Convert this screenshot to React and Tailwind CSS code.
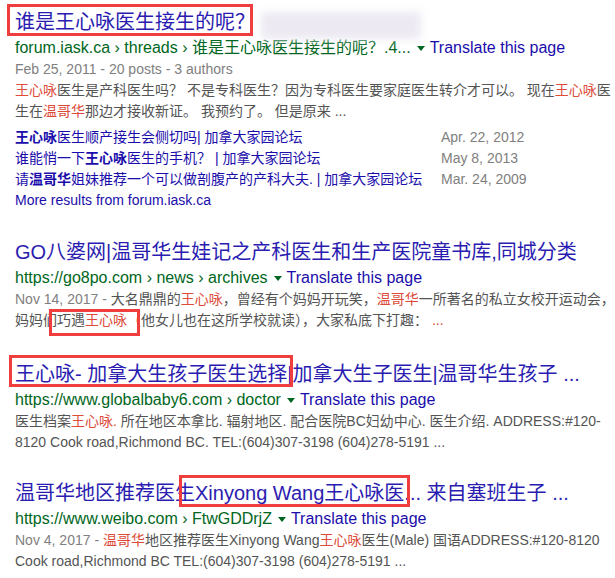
import React from "react";

function Box({ cls }) {
  return <span className={`absolute border-[3px] border-[#f03e3e] pointer-events-none ${cls}`} />;
}

function Arrow() {
  return (
    <span className="inline-block align-middle ml-[6px] mr-[5px] w-0 h-0 border-l-[4px] border-r-[4px] border-t-[5px] border-l-transparent border-r-transparent border-t-[#006621]" />
  );
}

function UrlLine({ children }) {
  return (
    <div className="mt-[2px] h-[22px] leading-[22px] text-[16px] text-[#006621] whitespace-nowrap">
      {children}
      <Arrow />
      <span className="text-[#1a0dab]">Translate this page</span>
    </div>
  );
}

function Line({ children }) {
  return <div className="relative h-[21px] leading-[21px] text-[14px] text-[#545454] whitespace-nowrap">{children}</div>;
}

const R = "text-[#dd4b39]";
const D = "text-[#808080]";

function SubLink({ children, date }) {
  return (
    <div className="flex h-[21px] leading-[21px] text-[14px] whitespace-nowrap">
      <div className="w-[426px] text-[#1a0dab]">{children}</div>
      <div className="text-[#808080]">{date}</div>
    </div>
  );
}

export default function App() {
  return (
    <div className="w-[615px] h-[578px] overflow-hidden bg-white pt-[9px] pl-[15px] font-['Liberation_Sans','Noto_Sans_CJK_SC',sans-serif]">
      {/* Result 1 */}
      <div>
        <div className="flex items-start h-[26px] leading-[26px] text-[20px] text-[#2a1cb0] whitespace-nowrap">
          <span className="relative inline-block">
            谁是王心咏医生接生的呢？
            <Box cls="left-[-8px] right-[2px] top-[-5px] h-[32px]" />
          </span>
          <div className="ml-[6px] mt-[3px] w-[160px] h-[27px] bg-[#ece9f2] blur-[4px]" />
        </div>
        <UrlLine>forum.iask.ca › threads › 谁是王心咏医生接生的呢？.4...</UrlLine>
        <Line>
          <span className={D}>Feb 25, 2011 - 20 posts - 3 authors</span>
        </Line>
        <Line>
          <span className={R}>王心咏</span>医生是产科医生吗？ 不是专科医生？因为专科医生要家庭医生转介才可以。 现在<span className={R}>王心咏</span>医
        </Line>
        <Line>
          生在<span className={R}>温哥华</span>那边才接收新证。 我预约了。 但是原来 ...
        </Line>
        <div className="mt-[5px]">
          <SubLink date="Apr. 22, 2012">
            <b>王心咏</b>医生顺产接生会侧切吗| 加拿大家园论坛
          </SubLink>
          <SubLink date="May 8, 2013">
            谁能悄一下<b>王心咏</b>医生的手机？ | 加拿大家园论坛
          </SubLink>
          <SubLink date="Mar. 24, 2009">
            请<b>温哥华</b>姐妹推荐一个可以做剖腹产的产科大夫. | 加拿大家园论坛
          </SubLink>
          <div className="h-[21px] leading-[21px] text-[14px] text-[#1a0dab]">More results from forum.iask.ca</div>
        </div>
      </div>

      {/* Result 2 */}
      <div className="mt-[28px]">
        <div className="h-[26px] leading-[26px] text-[20px] text-[#2a1cb0] whitespace-nowrap">
          GO八婆网|温哥华生娃记之产科医生和生产医院童书库,同城分类
        </div>
        <UrlLine>https://go8po.com › news › archives</UrlLine>
        <Line>
          <span className={D}>Nov 14, 2017 - </span>大名鼎鼎的<span className={R}>王心咏</span>，曾经有个妈妈开玩笑，<span className={R}>温哥华</span>一所著名的私立女校开运动会，
        </Line>
        <Line>
          妈妈们
          <span className="relative inline-block">
            巧遇<span className={R}>王心咏</span>
            <Box cls="left-[-8px] right-[-13px] top-[-1px] h-[27px]" />
          </span>
          （他女儿也在这所学校就读），大家私底下打趣： <span className={R}>...</span>
        </Line>
      </div>

      {/* Result 3 */}
      <div className="mt-[30px]">
        <div className="h-[26px] leading-[26px] text-[20px] text-[#2a1cb0] whitespace-nowrap">
          <span className="relative inline-block">
            王心咏- 加拿大生孩子医生选择
            <Box cls="left-[-6px] right-[-6px] top-[-6px] h-[32px]" />
          </span>
          |加拿大生子医生|温哥华生孩子 ...
        </div>
        <UrlLine>https://www.globalbaby6.com › doctor</UrlLine>
        <Line>
          医生档案<span className={R}>王心咏.</span> 所在地区本拿比. 辐射地区. 配合医院BC妇幼中心. 医生介绍. ADDRESS:#120-
        </Line>
        <Line>8120 Cook road,Richmond BC. TEL:(604)307-3198 (604)278-5191 ...</Line>
      </div>

      {/* Result 4 */}
      <div className="mt-[27px]">
        <div className="h-[26px] leading-[26px] text-[20px] text-[#2a1cb0] whitespace-nowrap">
          温哥华地区推荐医生
          <span className="relative inline-block">
            Xinyong Wang王心咏医
            <Box cls="left-[-16px] right-[-6px] top-[-5px] h-[32px]" />
          </span>
          ... 来自塞班生子 ...
        </div>
        <UrlLine>https://www.weibo.com › FtwGDDrjZ</UrlLine>
        <Line>
          <span className={D}>Nov 4, 2017 - </span>
          <span className={R}>温哥华</span>地区推荐医生Xinyong Wang<span className={R}>王心咏</span>医生(Male) 国语ADDRESS:#120-8120
        </Line>
        <Line>Cook road,Richmond BC TEL:(604)307-3198 (604)278-5191 ...</Line>
      </div>
    </div>
  );
}
